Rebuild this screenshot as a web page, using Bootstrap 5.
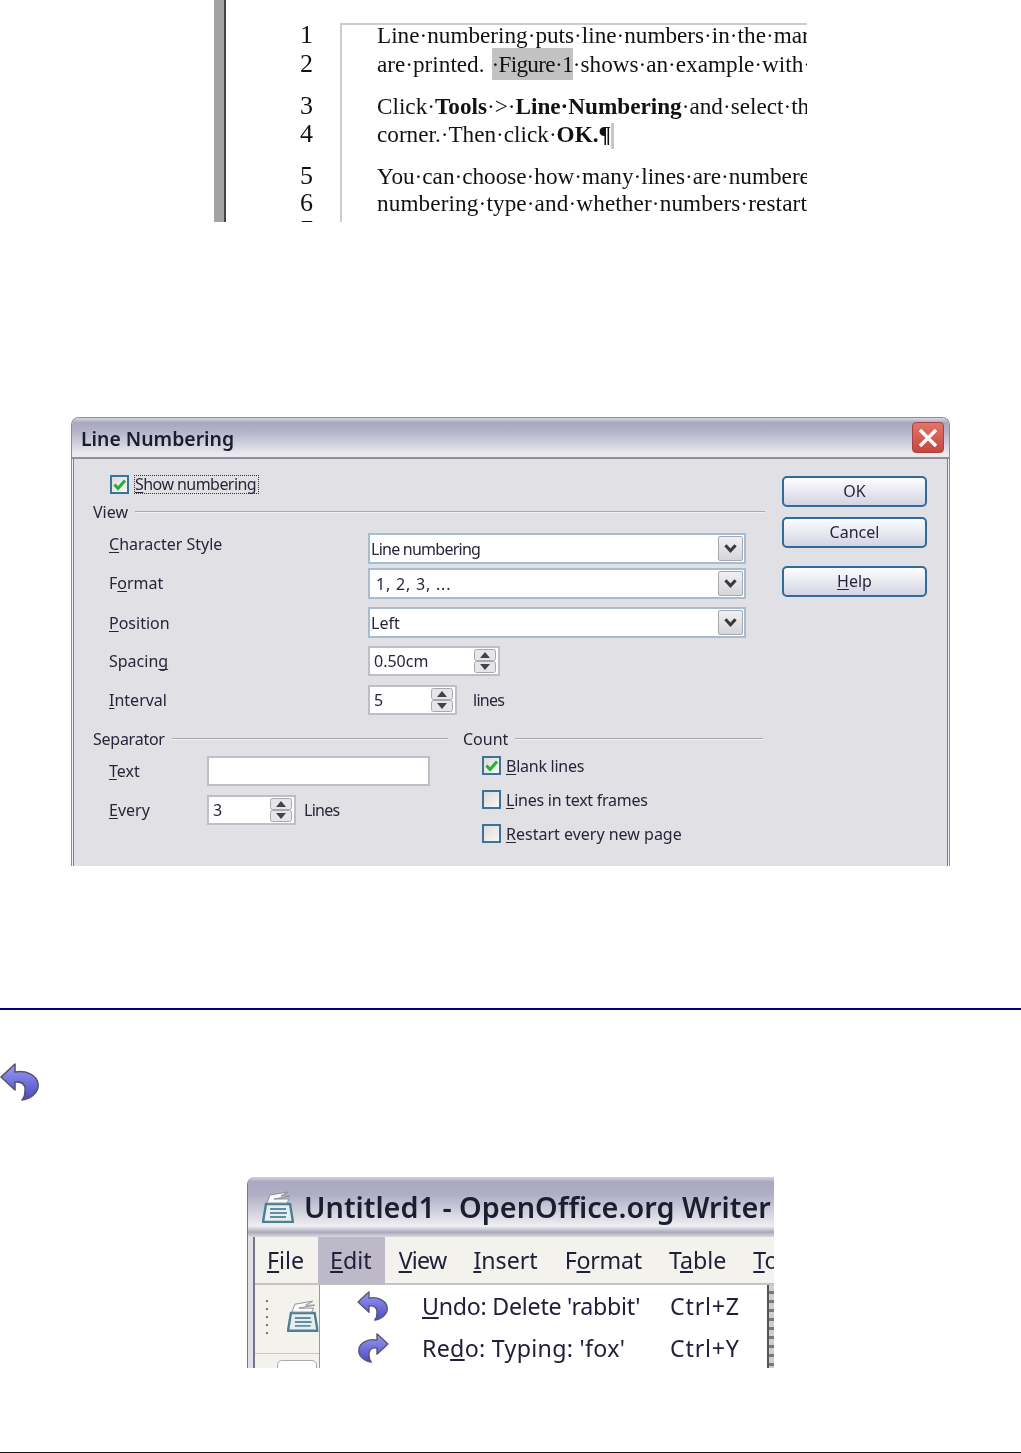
<!DOCTYPE html>
<html lang="en">
<head>
  <meta charset="UTF-8">
  <title>Line Numbering</title>
  <meta name="viewport" content="width=device-width, initial-scale=1">
  <link rel="stylesheet" href="https://cdn.jsdelivr.net/npm/bootstrap@5.3.0/dist/css/bootstrap.min.css">
  <style>
    html, body { margin: 0; padding: 0; background: #fff; }
    body { height: 1453px; overflow: hidden; font-family: "Noto Sans", "Liberation Sans", sans-serif; color: #26263a; }
    u { text-underline-offset: 2px; text-decoration-skip-ink: none; }
    .tight { letter-spacing: -.25px; }
    .tighter { letter-spacing: -.75px; }
    .wide { letter-spacing: .8px; }
    .wide-s { letter-spacing: .3px; }

    /* figure 1 - document with line numbers */
    .doc-fig { width: 593px; height: 222px; margin-left: 214px; overflow: hidden; font-family: "Liberation Serif", serif; color: #111; filter: blur(.4px); }
    .doc-bar { width: 12px; background: #a3a3a3; border-right: 2px solid #444; flex: none; }
    .doc-nums { width: 114px; padding-top: 23px; flex: none; text-align: center; padding-left: 47px; font-size: 26px; }
    .doc-page { flex: 1; margin-top: 23px; border-left: 2px solid #ccc; border-top: 2px solid #ccc; padding-left: 35px; font-size: 23.2px; white-space: nowrap; overflow: hidden; }
    .doc-line { height: 24px; line-height: 24px; }
    .doc-page .doc-line:first-child { margin-top: -2px; }
    .gap-s { margin-top: 5px; }
    .gap-t { margin-top: 4px; }
    .gap-u { margin-top: 3px; }
    .gap-p { margin-top: 18px; }
    .doc-hl { background: #c2c2c2; padding: 3px 0; margin-left: 7px; letter-spacing: -.7px; }
    .doc-stretch { letter-spacing: .12px; }
    .doc-cursor { display: inline-block; width: 3px; height: 26px; background: #c8c8c8; vertical-align: -7px; }

    /* figure 2 - dialog */
    .dlg { width: 879px; height: 449px; margin: 195px 0 0 71px; overflow: hidden; border: 1px solid #8a8aa0; border-bottom: 0; border-radius: 8px 8px 0 0; background: #e0e0e5; box-shadow: inset 1px 0 #f2f2f6, inset -1px 0 #f2f2f6; font-size: 16px; filter: blur(.3px); }
    .dlg-title { height: 41px; padding: 0 5px 0 9px; background: linear-gradient(#d8d8e2, #a9a8c0 12%, #b4b3c8 35%, #eaeaef 92%); border-bottom: 2px solid #8e8ea2; font-size: 19.4px; font-weight: 600; color: #1c1c30; }
    .dlg-title-text { padding-top: 3px; }
    .dlg-close { width: 32px; height: 31px; border-radius: 4px; background: linear-gradient(#e2756b, #c7463e); border: 1px solid #a8423c; flex: none; }
    .dlg-main { height: 407px; margin: 0 1px; border-left: 1px solid #7c7c94; border-right: 1px solid #7c7c94; }
    .dlg-left { width: 672px; margin-left: 19px; margin-right: 17px; padding-top: 16px; flex: none; }
    .dlg-right { width: 145px; padding-top: 17px; flex: none; }
    .dlg-btn { width: 145px; height: 31px; padding: 0; border: 2px solid #2f6c9c; border-radius: 5px; background: linear-gradient(#fdfdff, #d4d4e4); color: #26263a; font-size: 16px; line-height: 27px; }
    .dlg-btn:hover { border-color: #2f6c9c; background: linear-gradient(#fdfdff, #d4d4e4); color: #26263a; }
    .row-show { height: 19px; margin-left: 17px; }
    .focus-lbl { border: 1px dotted #333; margin-left: 5px; line-height: 17px; padding-right: 2px; letter-spacing: -.55px; }
    .chk { width: 19px; height: 19px; border: 2px solid #3e7296; background: linear-gradient(135deg, #dcdcd8, #f6f6f2); flex: none; }
    .chk svg { display: block; }
    .sect { height: 20px; margin-top: 8px; line-height: 20px; }
    .sect-line { flex: 1; height: 2px; background: linear-gradient(#a8a8ac 50%, #f2f2f4 50%); margin-left: 7px; }
    .frow { height: 31px; }
    .frow-n { height: 30px; }
    .flabel { width: 259px; margin-left: 16px; flex: none; }
    .flabel-s { width: 98px; margin-left: 16px; flex: none; }
    .sel { width: 378px; height: 100%; border: 2px solid #a6bdd0; background: #fff; padding: 0 1px 0 1px; }
    .sel-text { flex: 1; }
    .sel-btn { width: 25px; height: 25px; background: linear-gradient(#f0f0f2, #d6d6da); border: 1px solid #a8a8ae; border-radius: 2px; }
    .spin { height: 100%; border: 2px solid #bcc0c6; background: #fff; padding: 0 2px 0 4px; justify-content: space-between; }
    .spin-w1 { width: 132px; }
    .spin-w2 { width: 89px; }
    .spin-svg { flex: none; }
    .text-box { width: 223px; height: 30px; border: 2px solid #bcc0c6; background: #fff; }
    .col-sep { width: 355px; flex: none; }
    .col-count { width: 300px; margin-left: 15px; flex: none; }
    .chk-row { height: 19px; margin-left: 19px; gap: 5px; }
    .up-a { margin-bottom: 9px; }
    .up-b { margin-bottom: 2px; }
    .mt-a { margin-top: 11px; }
    .mt-b { margin-top: 4px; }
    .mt-c { margin-top: 8px; }
    .mt-d { margin-top: 9px; }
    .mt-e { margin-top: 14px; }
    .mt-f { margin-top: 7px; }
    .mt-g { margin-top: 15px; }
    .mt-h { margin-top: 10px; }
    .mt-i { margin-top: 18px; }

    /* rule and back arrow */
    .navy-rule { height: 2px; margin-top: 142px; background: #000080; }
    .back-arrow { display: block; margin: 53px 0 0 0; filter: blur(.4px); }

    /* figure 3 - writer window with edit menu */
    .win { width: 527px; height: 191px; margin: 76px 0 0 247px; overflow: hidden; border-left: 1px solid #77778c; border-top-left-radius: 8px; background: #e0e0e5; filter: blur(.4px); }
    .win-title { height: 60px; padding-left: 14px; gap: 10px; background: linear-gradient(#d4d4e0, #a9a8c0 8%, #b0afc6 30%, #eeeef2 82%, #a9a9bb 92%, #dadade); font-size: 28.8px; font-weight: 600; color: #1d1d32; white-space: nowrap; }
    .win-frame { height: 131px; margin-left: 5px; border-left: 2px solid #73738a; background: #f3f2ec; }
    .menu-bar { height: 48px; padding-left: 12px; font-size: 23.2px; white-space: nowrap; border-bottom: 2px solid #c4c4c4; color: #20203a; }
    .menu-item { margin-right: 27px; }
    .menu-active { background: #bdb9c9; height: 47px; padding: 0 13px 0 12px; margin: 0 14px 0 -13px; line-height: 47px; }
    .menu-body { height: 83px; }
    .tool-col { width: 64px; padding: 14px 0 0 9px; flex: none; overflow: hidden; }
    .tool-sep { border-top: 1px solid #c8c8c4; margin: 14px 0 0 -9px; height: 20px; }
    .tool-btn { width: 40px; height: 20px; margin: 6px 0 0 22px; background: #fff; border: 1px solid #aaa; border-radius: 5px 5px 0 0; }
    .drop { width: 450px; background: #fff; border-left: 1px solid #999; border-right: 2px solid #555; font-size: 23.2px; flex: none; color: #20203a; }
    .drop-row { height: 42px; white-space: nowrap; }
    .drop-icon { width: 102px; padding-left: 35px; flex: none; }
    .drop-label { width: 248px; flex: none; }
    .win-edge { flex: 1; background: repeating-linear-gradient(#cfcfcf 0 6px, #77777c 6px 9px); }

    .end-rule { height: 1px; margin-top: 84px; background: #111; }
  </style>
</head>
<body>
  <svg width="0" height="0" class="d-block" aria-hidden="true">
    <defs>
      <linearGradient id="arrowFill" x1="0" y1="0" x2="0" y2="1">
        <stop offset="0" stop-color="#9a9af6"/>
        <stop offset="1" stop-color="#4a4ac0"/>
      </linearGradient>
      <symbol id="arrow" viewBox="0 0 40 38">
        <path d="M15 1 L1 14 L15 27 L15 19 C22 18 26 22 25 28 C25 32 24 35 22 37 C32 36 39 28 38 21 C37 12 26 7 15 9 Z" fill="url(#arrowFill)" stroke="#55556a" stroke-width="1.6" stroke-linejoin="round"/>
      </symbol>
      <symbol id="writerDoc" viewBox="0 0 32 32">
        <path d="M1 31 L4 13 L28 13 L31 31 Z" fill="#e8eef0" stroke="#4d7f92" stroke-width="2.4"/>
        <path d="M5 12 L8 4 L26 1 L19 5 L28 5 L12 8 L27 8 L25 12 Z" fill="#fafafa" stroke="#8b9298"/>
        <path d="M8 18 H24 M8 22 H25 M8 26 H24" stroke="#5f8fa3" stroke-width="2"/>
      </symbol>
      <symbol id="spinner" viewBox="0 0 22 24">
        <rect x="0.5" y="0.5" width="21" height="11" rx="2" fill="#e6e6ea" stroke="#a8a8ae"/>
        <rect x="0.5" y="12.5" width="21" height="11" rx="2" fill="#e6e6ea" stroke="#a8a8ae"/>
        <path d="M11 3 L16 9 H6 Z M11 21 L16 15 H6 Z" fill="#444"/>
      </symbol>
      <symbol id="chevron" viewBox="0 0 25 25">
        <path d="M7 9 L12.5 15 L18 9" fill="none" stroke="#3a3a3a" stroke-width="3.4"/>
      </symbol>
      <symbol id="tick" viewBox="0 0 15 15">
        <path d="M2.5 7.5 L6 11.5 L13 3.5" fill="none" stroke="#22b03a" stroke-width="3"/>
      </symbol>
    </defs>
  </svg>

  <!-- Figure 1 -->
  <div class="doc-fig d-flex">
    <div class="doc-bar"></div>
    <div class="doc-nums">
      <div class="doc-line">1</div>
      <div class="doc-line gap-s">2</div>
      <div class="doc-line gap-p">3</div>
      <div class="doc-line gap-t">4</div>
      <div class="doc-line gap-p">5</div>
      <div class="doc-line gap-u">6</div>
      <div class="doc-line gap-u">7</div>
    </div>
    <div class="doc-page">
      <div class="doc-line">Line·numbering·puts·line·numbers·in·the·margin</div>
      <div class="doc-line gap-s">are·printed.<span class="doc-hl">·Figure·1</span>·shows·an·example·with·</div>
      <div class="doc-line gap-p">Click·<b>Tools</b>·&gt;·<b>Line·Numbering</b>·and·select·the</div>
      <div class="doc-line gap-t">corner.·Then·click·<b>OK.¶</b><span class="doc-cursor"></span></div>
      <div class="doc-line gap-p">You·can·choose·how·many·lines·are·numbered</div>
      <div class="doc-line gap-u doc-stretch">numbering·type·and·whether·numbers·restart</div>
    </div>
  </div>

  <!-- Figure 2 -->
  <div class="dlg">
    <div class="dlg-title d-flex align-items-center justify-content-between">
      <span class="dlg-title-text">Line Numbering</span>
      <span class="dlg-close d-flex align-items-center justify-content-center">
        <svg width="22" height="22" viewBox="0 0 22 22"><path d="M3 3 L19 19 M19 3 L3 19" stroke="#fff" stroke-width="3.4"/></svg>
      </span>
    </div>
    <div class="dlg-main d-flex">
      <div class="dlg-left">
        <div class="row-show d-flex align-items-center">
          <span class="chk"><svg width="15" height="15"><use href="#tick"/></svg></span>
          <span class="focus-lbl"><u>S</u>how numbering</span>
        </div>
        <div class="sect d-flex align-items-center"><span>View</span><span class="sect-line"></span></div>

        <div class="frow mt-a d-flex align-items-center">
          <span class="flabel up-a"><u>C</u>haracter Style</span>
          <div class="sel d-flex align-items-center"><span class="sel-text tighter">Line numbering</span><span class="sel-btn"><svg width="23" height="23" class="d-block"><use href="#chevron"/></svg></span></div>
        </div>
        <div class="frow mt-b d-flex align-items-center">
          <span class="flabel up-b">F<u>o</u>rmat</span>
          <div class="sel d-flex align-items-center"><span class="sel-text wide">&nbsp;1, 2, 3, ...</span><span class="sel-btn"><svg width="23" height="23" class="d-block"><use href="#chevron"/></svg></span></div>
        </div>
        <div class="frow mt-c d-flex align-items-center">
          <span class="flabel"><u>P</u>osition</span>
          <div class="sel d-flex align-items-center"><span class="sel-text">Left</span><span class="sel-btn"><svg width="23" height="23" class="d-block"><use href="#chevron"/></svg></span></div>
        </div>
        <div class="frow-n mt-c d-flex align-items-center">
          <span class="flabel">Spacin<u>g</u></span>
          <div class="spin spin-w1 d-flex align-items-center"><span>0.50cm</span><svg class="spin-svg" width="22" height="24"><use href="#spinner"/></svg></div>
        </div>
        <div class="frow-n mt-d d-flex align-items-center">
          <span class="flabel"><u>I</u>nterval</span>
          <div class="spin spin-w2 d-flex align-items-center"><span>5</span><svg class="spin-svg" width="22" height="24"><use href="#spinner"/></svg></div>
          <span class="ms-3 tighter">lines</span>
        </div>

        <div class="d-flex">
          <div class="col-sep">
            <div class="sect mt-e d-flex align-items-center"><span class="tight">Separator</span><span class="sect-line"></span></div>
            <div class="frow-n mt-f d-flex align-items-center">
              <span class="flabel-s"><u>T</u>ext</span>
              <div class="text-box"></div>
            </div>
            <div class="frow-n mt-d d-flex align-items-center">
              <span class="flabel-s"><u>E</u>very</span>
              <div class="spin spin-w2 d-flex align-items-center"><span>3</span><svg class="spin-svg" width="22" height="24"><use href="#spinner"/></svg></div>
              <span class="ms-2 tighter">Lines</span>
            </div>
          </div>
          <div class="col-count">
            <div class="sect mt-e d-flex align-items-center"><span>Count</span><span class="sect-line"></span></div>
            <div class="chk-row mt-f d-flex align-items-center"><span class="chk"><svg width="15" height="15"><use href="#tick"/></svg></span><span class="tight"><u>B</u>lank lines</span></div>
            <div class="chk-row mt-g d-flex align-items-center"><span class="chk"></span><span class="tight"><u>L</u>ines in text frames</span></div>
            <div class="chk-row mt-g d-flex align-items-center"><span class="chk"></span><span><u>R</u>estart every new page</span></div>
          </div>
        </div>
      </div>
      <div class="dlg-right d-flex flex-column">
        <button type="button" class="btn dlg-btn">OK</button>
        <button type="button" class="btn dlg-btn mt-h">Cancel</button>
        <button type="button" class="btn dlg-btn mt-i"><u>H</u>elp</button>
      </div>
    </div>
  </div>

  <div class="navy-rule"></div>
  <svg class="back-arrow" width="40" height="38"><use href="#arrow"/></svg>

  <!-- Figure 3 -->
  <div class="win">
    <div class="win-title d-flex align-items-center">
      <svg width="32" height="32"><use href="#writerDoc"/></svg>
      <span>Untitled1 - OpenOffice.org Writer</span>
    </div>
    <div class="win-frame">
      <div class="menu-bar d-flex align-items-center">
        <span class="menu-item"><u>F</u>ile</span>
        <span class="menu-active"><u>E</u>dit</span>
        <span class="menu-item tighter"><u>V</u>iew</span>
        <span class="menu-item"><u>I</u>nsert</span>
        <span class="menu-item tight">F<u>o</u>rmat</span>
        <span class="menu-item">T<u>a</u>ble</span>
        <span class="menu-item"><u>T</u>ools</span>
      </div>
      <div class="menu-body d-flex">
        <div class="tool-col">
          <div class="d-flex">
            <svg width="8" height="40"><path d="M2 2 h3 M2 10 h3 M2 18 h3 M2 26 h3 M2 34 h3" stroke="#777" stroke-width="2" stroke-dasharray="2 1"/></svg>
            <svg class="ms-3" width="34" height="34"><use href="#writerDoc"/></svg>
          </div>
          <div class="tool-sep"><div class="tool-btn"></div></div>
        </div>
        <div class="drop">
          <div class="drop-row d-flex align-items-center">
            <span class="drop-icon"><svg class="d-block" width="36" height="30"><use href="#arrow"/></svg></span>
            <span class="drop-label tight"><u>U</u>ndo: Delete 'rabbit'</span>
            <span class="wide">Ctrl+Z</span>
          </div>
          <div class="drop-row d-flex align-items-center">
            <span class="drop-icon"><svg class="d-block" width="36" height="30"><g transform="translate(36,0) scale(-1,1)"><use href="#arrow"/></g></svg></span>
            <span class="drop-label wide-s">Re<u>d</u>o: Typing: 'fox'</span>
            <span class="wide">Ctrl+Y</span>
          </div>
        </div>
        <div class="win-edge"></div>
      </div>
    </div>
  </div>

  <div class="end-rule"></div>

  <script src="https://cdn.jsdelivr.net/npm/bootstrap@5.3.0/dist/js/bootstrap.bundle.min.js"></script>
</body>
</html>
